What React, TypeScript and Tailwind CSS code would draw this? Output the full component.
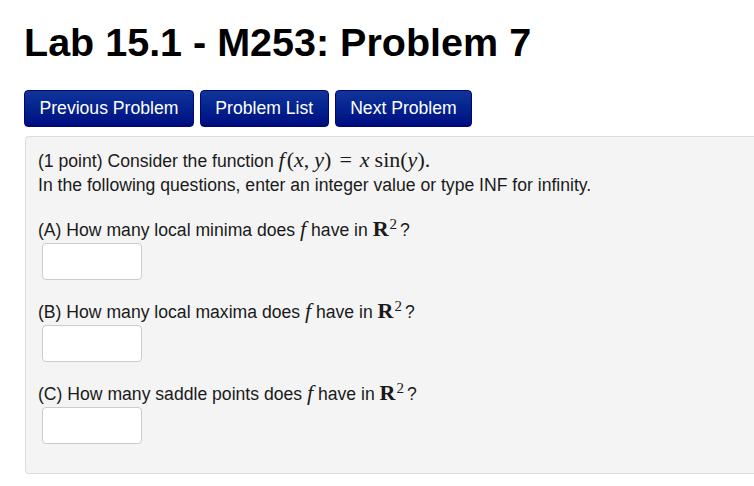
import React from 'react';

const V = ({ children }: { children: React.ReactNode }) => <i className="italic">{children}</i>;

const R2 = () => (
  <span className="font-['Liberation_Serif',serif] text-[22px]">
    <b className="font-bold">R</b>
    <span className="relative -top-[7px] ml-[1px] mr-[3px] text-[15px] leading-none">2</span>
  </span>
);

const Fn = () => (
  <span className="font-['Liberation_Serif',serif] text-[22px]">
    <V>f</V><span className="ml-[2px]">(</span><V>x</V>,<span className="ml-[5px]" /><V>y</V>)<span className="mx-[8px]">=</span><V>x</V>
    <span className="ml-[5px]">sin</span>(<V>y</V>).
  </span>
);

const Question = ({ label, text }: { label: string; text: string }) => (
  <div className="mb-[20px]">
    <p className="leading-[21px]">
      ({label}) {text} <span className="font-['Liberation_Serif',serif] text-[22px] italic">f</span> have in <R2 />?
    </p>
    <input
      type="text"
      className="mt-[2px] ml-[4px] block h-[37px] w-[100px] rounded-[4px] border border-[#cccccc] bg-white px-2"
    />
  </div>
);

export default function App() {
  return (
    <div className="min-h-screen bg-white font-['Liberation_Sans',Arial,sans-serif] text-[#1a1a1a]">
      <div className="pl-[24px] pt-[19px]">
        <h1 className="text-[39.5px] leading-[46px] font-bold text-black">Lab 15.1 - M253: Problem 7</h1>
        <div className="mt-[25px] flex gap-[6px]">
          {['Previous Problem', 'Problem List', 'Next Problem'].map((b) => (
            <button
              key={b}
              className="h-[37px] rounded-[4px] border border-[#00086e] bg-gradient-to-b from-[#12349c] to-[#000a80] px-[14.5px] text-[17.6px] text-white"
            >
              {b}
            </button>
          ))}
        </div>
        <div className="mt-[9px] ml-[1px] rounded-tl-[4px] rounded-bl-[4px] border border-r-0 border-[#dddddd] bg-[#f4f4f4] pl-[12px] pt-[10px] pb-[9px] text-[17.6px]">
          <p className="leading-[25px]">
            (1 point) Consider the function <Fn />
          </p>
          <p className="leading-[22px] mb-[22px]">In the following questions, enter an integer value or type INF for infinity.</p>
          <Question label="A" text="How many local minima does" />
          <Question label="B" text="How many local maxima does" />
          <Question label="C" text="How many saddle points does" />
        </div>
      </div>
    </div>
  );
}
